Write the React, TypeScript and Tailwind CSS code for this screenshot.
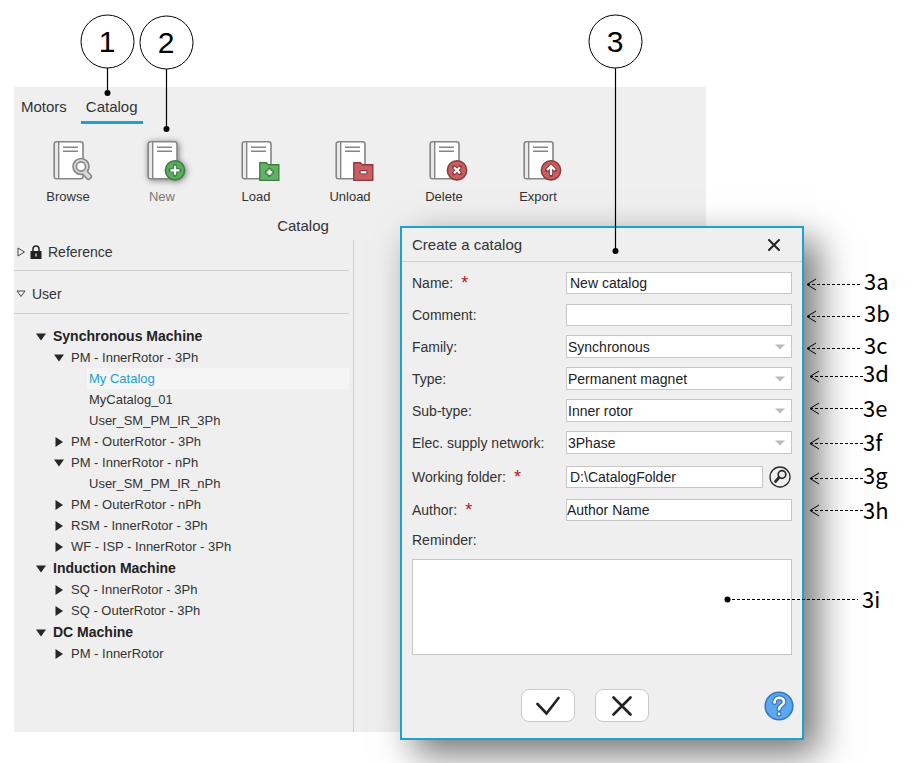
import React from "react";

const TOOLS = [
  { label: "Browse", badge: "search" },
  { label: "New", badge: "plus" },
  { label: "Load", badge: "folder-plus" },
  { label: "Unload", badge: "folder-minus" },
  { label: "Delete", badge: "cross" },
  { label: "Export", badge: "up" },
];

const TREE = [
  {
    name: "Synchronous Machine",
    items: [
      { name: "PM - InnerRotor - 3Ph", catalogs: ["My Catalog", "MyCatalog_01", "User_SM_PM_IR_3Ph"] },
      { name: "PM - OuterRotor - 3Ph" },
      { name: "PM - InnerRotor - nPh", catalogs: ["User_SM_PM_IR_nPh"] },
      { name: "PM - OuterRotor - nPh" },
      { name: "RSM - InnerRotor - 3Ph" },
      { name: "WF - ISP - InnerRotor - 3Ph" },
    ],
  },
  {
    name: "Induction Machine",
    items: [{ name: "SQ - InnerRotor - 3Ph" }, { name: "SQ - OuterRotor - 3Ph" }],
  },
  { name: "DC Machine", items: [{ name: "PM - InnerRotor" }] },
];

const SELECTS = [
  { id: "family", label: "Family:", value: "Synchronous" },
  { id: "type", label: "Type:", value: "Permanent magnet" },
  { id: "subtype", label: "Sub-type:", value: "Inner rotor" },
  { id: "network", label: "Elec. supply network:", value: "3Phase" },
];

const STEPS = [
  { text: "1", x: 107, y: 41, end: 93 },
  { text: "2", x: 166, y: 42, end: 129 },
  { text: "3", x: 615, y: 41, end: 251 },
];

const POINTERS = [
  { text: "3a", tip: 807, y: 284, tx: 864, ty: 290 },
  { text: "3b", tip: 807, y: 316, tx: 864, ty: 322 },
  { text: "3c", tip: 807, y: 348, tx: 864, ty: 354 },
  { text: "3d", tip: 810, y: 376, tx: 863, ty: 382 },
  { text: "3e", tip: 810, y: 408, tx: 863, ty: 417 },
  { text: "3f", tip: 810, y: 443, tx: 863, ty: 451 },
  { text: "3g", tip: 810, y: 478, tx: 863, ty: 484 },
  { text: "3h", tip: 810, y: 510, tx: 863, ty: 519 },
];

function Badge({ type }: { type: string }) {
  if (type === "search") {
    return (
      <g>
        <path d="M38.5 33 l5 5.500" stroke="#858585" strokeWidth="7" strokeLinecap="round" />
        <circle cx="36" cy="28.5" r="8" fill="#d9d9d9" stroke="#858585" strokeWidth="1.6" />
        <path d="M39 33.500 l4.500 5" stroke="#d9d9d9" strokeWidth="4" strokeLinecap="round" />
        <circle cx="36" cy="28.5" r="4.6" fill="#fff" stroke="#858585" strokeWidth="1.6" />
      </g>
    );
  }
  if (type.startsWith("folder")) {
    const plus = type === "folder-plus";
    const edge = plus ? "#3f7d43" : "#8d3a3c";
    return (
      <g>
        <path
          d="M26.8 24.8 h6.6 l1.8 2 h10.6 v15.6 h-19 z"
          fill={plus ? "#62b266" : "#c95f62"}
          stroke={edge}
          strokeWidth="1.4"
        />
        <path
          d={plus ? "M34 34.3 h5 M36.5 31.8 v5" : "M34.5 34.3 h4"}
          stroke={edge}
          strokeWidth="4.4"
          strokeLinecap="round"
        />
        <path d={plus ? "M33.7 34.3 h5.6 M36.5 31.5 v5.6" : "M33.7 34.3 h5.6"} stroke="#fff" strokeWidth="2.2" />
      </g>
    );
  }
  const green = type === "plus";
  const mark: Record<string, string> = {
    plus: "M31.5 32.3 h9 M36 27.8 v9",
    cross: "M33 29.3 l6 6 M39 29.3 l-6 6",
    up: "M36 37 v-8.5 M32 32 l4 -4 l4 4",
  };
  return (
    <g fill="none">
      <circle
        cx="36"
        cy="32.3"
        r="9.6"
        fill={green ? "#5aad5e" : "#c95f62"}
        stroke={green ? "#3f7d43" : "#8d3a3c"}
        strokeWidth="1.6"
      />
      <path d={mark[type]} stroke={green ? "#3f7d43" : "#8d3a3c"} strokeWidth="4.2" strokeLinecap="round" />
      <path d={mark[type]} stroke="#fff" strokeWidth="2.2" />
    </g>
  );
}

function BookIcon({ badge }: { badge: string }) {
  return (
    <svg
      viewBox="0 0 46 46"
      fill="none"
      className={
        badge === "plus"
          ? "w-[46px] h-[46px] overflow-visible drop-shadow-[1px_1px_3px_rgba(0,0,0,0.5)]"
          : "w-[46px] h-[46px] overflow-visible"
      }
    >
      <rect x="9.2" y="3.7" width="28.8" height="37" rx="2.5" fill="#fff" stroke="#858585" strokeWidth="1.6" />
      <path d="M10 5 h3.5 v34.500 h-3.5 z" fill="#e9e9e9" />
      <path d="M13.7 4 v36.500" stroke="#858585" strokeWidth="1.4" />
      <path d="M18 9.200 h15 M18 13.200 h15" stroke="#858585" strokeWidth="1.500" />
      <Badge type={badge} />
    </svg>
  );
}

function Arrow({ open }: { open: boolean }) {
  return (
    <svg viewBox="0 0 10 10" className="w-[10px] h-[10px] shrink-0">
      <path d={open ? "M0 1.500 h10 l-5 7 z" : "M1.500 0 v10 l7.500 -5 z"} fill="#262626" />
    </svg>
  );
}

function Tree() {
  return (
    <ul className="pt-3 text-[13px] leading-[21px]">
      {TREE.map((group) => (
        <li key={group.name} className="pb-px">
          <div className="flex items-center gap-[7px] pl-[22px] text-sm leading-[21px] font-bold text-[#222]">
            <Arrow open />
            {group.name}
          </div>
          <ul>
            {group.items.map((item: { name: string; catalogs?: string[] }) => (
              <li key={item.name}>
                <div className="flex items-center gap-[7px] pl-10">
                  <Arrow open={!!item.catalogs} />
                  {item.name}
                </div>
                {item.catalogs?.map((c) => (
                  <div
                    key={c}
                    className={c === "My Catalog" ? "ml-[73px] pl-0.5 bg-[#f5f5f5] text-[#1ba1d4]" : "ml-[73px] pl-0.5"}
                  >
                    {c}
                  </div>
                ))}
              </li>
            ))}
          </ul>
        </li>
      ))}
    </ul>
  );
}

function Label({ id, text, required }: { id: string; text: string; required?: boolean }) {
  return (
    <label htmlFor={id} className="flex w-[154px] shrink-0 gap-2">
      {text}
      {required && <span className="text-lg leading-5 text-[#b3161b]">*</span>}
    </label>
  );
}

const field = "min-w-0 flex-1 bg-white border border-[#c6c6c6] text-[#222] outline-none";

function CreateDialog() {
  return (
    <section
      role="dialog"
      aria-labelledby="dialog-title"
      className="absolute top-[226px] left-[400px] right-[108px] bg-[#efefef] border-2 border-[#1ba1d4] shadow-[14px_14px_34px_rgba(0,0,0,0.55)] text-sm leading-5"
    >
      <header className="flex items-center justify-between h-[34px] pl-[10px] pr-[22px] border-b border-[#cfcfcf]">
        <h2 id="dialog-title" className="text-[15px]">Create a catalog</h2>
        <button type="button" aria-label="Close">
          <svg viewBox="0 0 12 12" className="w-3 h-3">
            <path d="M1 1 l10 10 M11 1 l-10 10" stroke="#222" strokeWidth="2" strokeLinecap="round" />
          </svg>
        </button>
      </header>

      <form className="pt-[10px]">
        <div className="px-[10px]">
          <div className="flex flex-col gap-[10px]">
            <div className="flex items-center h-[22px]">
              <Label id="name" text="Name:" required />
              <input id="name" defaultValue="New catalog" className={`${field} h-[22px] px-[3px]`} />
            </div>
            <div className="flex items-center h-[22px]">
              <Label id="comment" text="Comment:" />
              <input id="comment" className={`${field} h-[22px] px-[3px]`} />
            </div>
          </div>

          <div className="flex flex-col gap-[9px] mt-[9px]">
            {SELECTS.map((s) => (
              <div key={s.id} className="relative flex items-center h-[23px]">
                <Label id={s.id} text={s.label} />
                <select id={s.id} className={`${field} h-[23px] px-px appearance-none`}>
                  <option>{s.value}</option>
                </select>
                <svg viewBox="0 0 10 6" className="absolute right-[7px] w-[10px] h-[6px] pointer-events-none">
                  <path d="M0 0.500 h10 l-5 5 z" fill="#bdbdbd" />
                </svg>
              </div>
            ))}
          </div>

          <div className="flex flex-col gap-[11px] mt-3">
            <div className="flex items-center h-[22px]">
              <Label id="folder" text="Working folder:" required />
              <input id="folder" defaultValue="D:\CatalogFolder" className={`${field} h-[22px] px-[3px]`} />
              <button type="button" aria-label="Browse folder" className="ml-[6px] mr-px">
                <svg viewBox="0 0 22 22" fill="none" stroke="#2b2b2b" className="w-[22px] h-[22px]">
                  <circle cx="11" cy="11" r="10" strokeWidth="1.3" />
                  <circle cx="13" cy="8.500" r="3.800" strokeWidth="1.700" />
                  <path d="M10 11.500 l-3.500 4" strokeWidth="2.800" strokeLinecap="round" />
                </svg>
              </button>
            </div>
            <div className="flex items-center h-[22px]">
              <Label id="author" text="Author:" required />
              <input id="author" defaultValue="Author Name" className={`${field} h-[22px]`} />
            </div>
          </div>

          <label htmlFor="reminder" className="block mt-[9px]">Reminder:</label>
          <textarea
            id="reminder"
            className="block w-full h-24 mt-[9px] bg-white border border-[#c6c6c6] resize-none outline-none"
          />
        </div>

        <footer className="flex items-center justify-between pt-[34px] pb-4 pl-[119px] pr-2">
          <div className="flex gap-5">
            <button
              type="submit"
              aria-label="Validate"
              className="flex items-center justify-center w-[54px] h-[33px] bg-white border border-[#c9c9c9] rounded-lg"
            >
              <svg viewBox="0 0 24 20" fill="none" className="w-6 h-5">
                <path d="M1.500 8 l9 9.500 l12 -15.500" stroke="#222" strokeWidth="2.600" strokeLinecap="round" />
              </svg>
            </button>
            <button
              type="button"
              aria-label="Cancel"
              className="flex items-center justify-center w-[54px] h-[33px] bg-white border border-[#c9c9c9] rounded-lg"
            >
              <svg viewBox="0 0 20 20" fill="none" className="w-5 h-5">
                <path d="M1.500 1.500 l17 17 M18.500 1.500 l-17 17" stroke="#222" strokeWidth="2.600" strokeLinecap="round" />
              </svg>
            </button>
          </div>
          <button type="button" aria-label="Help">
            <svg viewBox="0 0 30 30" fill="none" className="w-[30px] h-[30px]">
              <circle cx="15" cy="15" r="13.800" fill="#5ba7f2" stroke="#3877b8" strokeWidth="1.600" />
              <g strokeLinecap="round" strokeLinejoin="round">
                <path d="M10.500 11.500 c0 -6.500 9.500 -6 9.500 -0.800 c0 3.600 -5 3.600 -5 7.600 M15 22.800 v0.200" stroke="#3877b8" strokeWidth="5" />
                <path d="M10.500 11.500 c0 -6.500 9.500 -6 9.500 -0.800 c0 3.600 -5 3.600 -5 7.600 M15 22.800 v0.200" stroke="#fff" strokeWidth="2.600" />
              </g>
            </svg>
          </button>
        </footer>
      </form>
    </section>
  );
}

// numbered callouts drawn over the window
function Callouts() {
  return (
    <svg
      className="absolute top-0 left-0 w-[912px] h-[763px] pointer-events-none"
      viewBox="0 0 912 763"
      fill="none"
      stroke="#000"
    >
      {STEPS.map((s) => (
        <g key={s.text}>
          <path d={`M${s.x + 0.5} ${s.y + 26} V${s.end}`} strokeWidth="1.2" />
          <circle cx={s.x + 0.5} cy={s.y + 0.5} r="26.500" fill="#fff" />
          <circle cx={s.x + 0.5} cy={s.end} r="3" fill="#000" stroke="none" />
          <text
            x={s.x}
            y={s.y + 11}
            textAnchor="middle"
            fill="#000"
            stroke="none"
            className="text-[30px] font-['Liberation_Sans',sans-serif]"
          >
            {s.text}
          </text>
        </g>
      ))}
      {POINTERS.map((p) => (
        <g key={p.text}>
          <path d={`M${p.tip} ${p.y + 0.5} h55`} strokeDasharray="3 2" />
          <path d={`M${p.tip + 9} ${p.y - 5} l-9 5.500 l9 5.500`} />
          <text x={p.tx} y={p.ty} fill="#000" stroke="none" className="text-[22px] font-['Noto_Sans_CJK_SC',sans-serif]">
            {p.text}
          </text>
        </g>
      ))}
      <circle cx="727.500" cy="599.500" r="3" fill="#000" stroke="none" />
      <path d="M727 599.500 H858" strokeDasharray="3 2" />
      <text x="862" y="608" fill="#000" stroke="none" className="text-[22px] font-['Noto_Sans_CJK_SC',sans-serif]">
        3i
      </text>
    </svg>
  );
}

export default function App() {
  return (
    <div className="relative flex flex-col min-h-screen overflow-hidden pt-[87px] pb-[31px] pl-[14px] pr-[206px] bg-white text-[#333] font-['Liberation_Sans',Arial,sans-serif]">
      <main className="flex flex-col flex-1 pt-[10px] bg-[#efefef]">
        <nav className="flex gap-[9px] pl-0.5 text-[15px] leading-5">
          <button type="button" className="px-[5px] pb-1 border-b-3 border-transparent">Motors</button>
          <button type="button" className="px-[5px] pb-1 border-b-3 border-[#1ba1d4]">Catalog</button>
        </nav>

        <div className="self-start mt-[14px] ml-[7px]">
          <div className="flex">
            {TOOLS.map((t) => (
              <button
                key={t.label}
                type="button"
                className="flex flex-col items-center w-[94px] gap-[5px] text-[13px] leading-4"
              >
                <BookIcon badge={t.badge} />
                <span className={t.label === "New" ? "text-[#777]" : ""}>{t.label}</span>
              </button>
            ))}
          </div>
          <p className="mt-[11px] text-center text-[15px] leading-5">Catalog</p>
        </div>

        <aside className="flex-1 w-[340px] mt-1 pr-1 border-r border-[#cfcfcf]">
          <div className="flex items-center h-[31px] pl-[3px] pb-[6px] text-sm border-b border-[#cfcfcf]">
            <svg viewBox="0 0 9 10" className="w-[9px] h-[10px]">
              <path d="M1 1 v8 l6.500 -4 z" fill="none" stroke="#444" />
            </svg>
            <svg viewBox="0 0 12 14" className="w-3 h-[14px] ml-1 mr-[6px]">
              <path d="M3 7 V4 a3 3 0 0 1 6 0 V7" fill="none" stroke="#222" strokeWidth="1.500" />
              <rect x="0.500" y="6" width="11" height="8" rx="0.500" fill="#222" />
              <path d="M6 8.500 v3" stroke="#ddd" strokeWidth="1.300" />
            </svg>
            Reference
          </div>
          <div className="flex items-center h-[43px] pl-0.5 pt-1 gap-[6px] text-sm border-b border-[#cfcfcf]">
            <svg viewBox="0 0 10 8" className="w-[10px] h-2">
              <path d="M1 1 h8 l-4 5.500 z" fill="none" stroke="#444" />
            </svg>
            User
          </div>
          <Tree />
        </aside>
      </main>
      <CreateDialog />
      <Callouts />
    </div>
  );
}
